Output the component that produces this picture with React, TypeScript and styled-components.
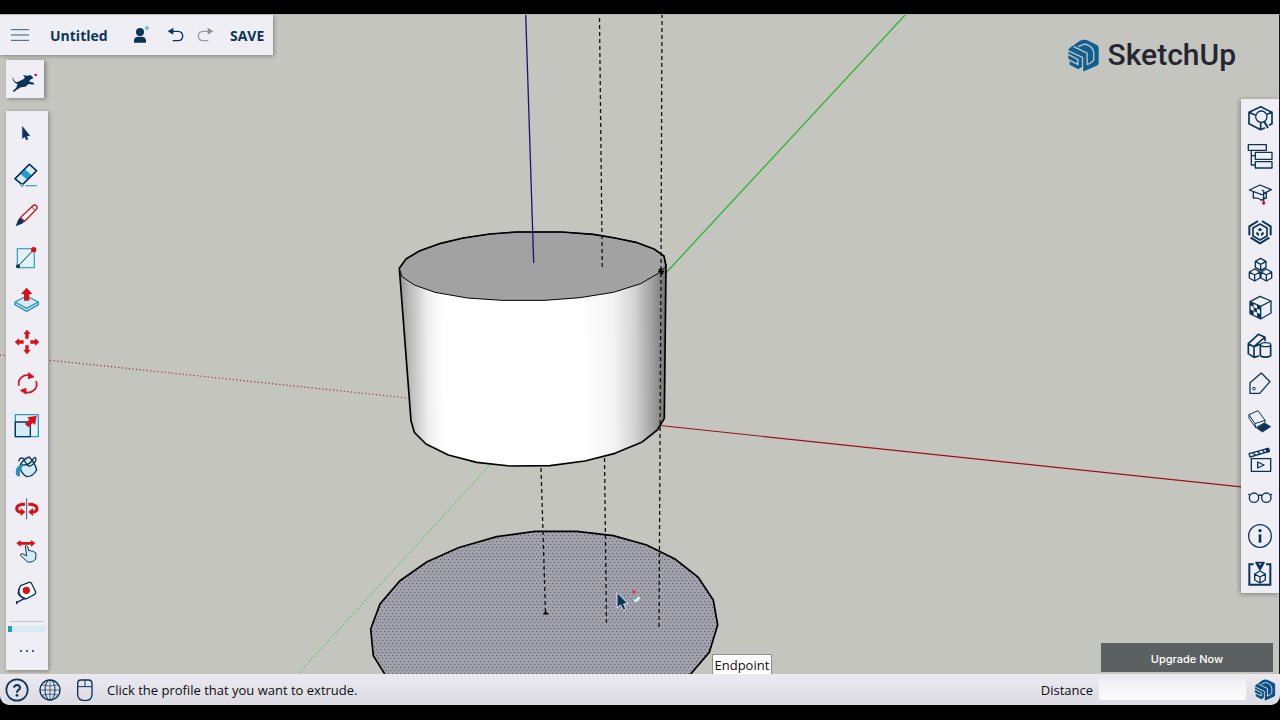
import React from "react";
import styled, { createGlobalStyle } from "styled-components";

const navy = "#0b3558";
const cyan = "#3fa6c8";
const pale = "#d3ecf5";
const red = "#d9101c";
const panel = "#efeef5";
const font = '"Open Sans", "Noto Sans", sans-serif';

const GlobalStyle = createGlobalStyle`
  * { box-sizing: border-box; }
  body { margin: 0; background: #000; font-family: ${font}; color: #0c0c10; }
  button { font: inherit; color: inherit; border: 0; padding: 0; background: none; cursor: pointer; }
`;

const Frame = styled.div`
  display: flex;
  flex-direction: column;
  min-height: 100vh;
  padding: 14px 0 15px;
`;

const Workspace = styled.main`
  position: relative;
  flex: 1;
  display: flex;
  justify-content: space-between;
  background: #c5c5bf;
  border-top: 1px solid #b4b4b0;
  border-right: 1px solid #14122c;
  overflow: hidden;
`;

const Scene = styled.svg`
  position: absolute;
  inset: 0;
  width: 100%;
  height: 100%;
`;

const LeftColumn = styled.div`
  position: relative;
  display: flex;
  flex-direction: column;
  align-items: flex-start;
  padding-bottom: 4px;
`;

const RightColumn = styled.div`
  position: relative;
  display: flex;
  flex-direction: column;
  align-items: flex-end;
  padding: 23px 0 2px;
`;

const FileBar = styled.header`
  display: flex;
  align-items: center;
  height: 40px;
  padding: 0 9px 0 7px;
  background: ${panel};
  color: ${navy};
  font-size: 14px;
  font-weight: 700;
  box-shadow: 1px 1px 4px rgba(0, 0, 0, 0.35);
`;

const Title = styled.button`
  min-width: 60px;
  margin: 0 18px 0 17px;
  text-align: left;
`;

const IconButton = styled.button<{ $gap?: number }>`
  display: flex;
  align-items: center;
  justify-content: center;
  margin-right: ${(p) => p.$gap ?? 0}px;
`;

const Icon = styled.svg`
  display: block;
  width: 26px;
  height: 26px;
  fill: none;
  stroke: ${navy};
  stroke-width: 4;
  stroke-linejoin: round;
`;

const SearchTile = styled.button`
  display: flex;
  align-items: center;
  justify-content: center;
  width: 38px;
  height: 38px;
  margin: 5px 0 13px 6px;
  background: ${panel};
  box-shadow: 2px 1px 4px rgba(0, 0, 0, 0.35);
`;

const ToolPanel = styled.nav`
  flex: 1;
  display: flex;
  flex-direction: column;
  width: 42px;
  margin-left: 6px;
  padding-top: 1px;
  background: ${panel};
  box-shadow: 1px 1px 4px rgba(0, 0, 0, 0.35);
`;

const ToolList = styled.div`
  flex: 1;
  display: grid;
  grid-auto-rows: 1fr;
`;

const PanelFooter = styled.div`
  display: flex;
  flex-direction: column;
  padding-top: 8px;
`;

const Divider = styled.hr`
  width: 34px;
  height: 1px;
  margin: 0 auto 4px;
  border: 0;
  background: #c6c6c9;
`;

const Track = styled.div`
  height: 6px;
  margin: 0 3px 0 2px;
  background: linear-gradient(90deg, #2c95b8 4px, #d5eaf2 4px);
`;

const MoreButton = styled.button`
  display: flex;
  align-items: center;
  justify-content: center;
  height: 38px;
`;

const Brand = styled.div`
  display: flex;
  align-items: center;
  gap: 8px;
  height: 34px;
  margin-right: 43px;
  color: #262633;
  font: 500 30px/34px Roboto, sans-serif;
`;

const BrandMark = styled.svg<{ $size: number }>`
  display: block;
  flex: none;
  width: ${(p) => p.$size}px;
  height: ${(p) => p.$size}px;
`;

const SidePanel = styled.nav`
  display: flex;
  flex-direction: column;
  width: 38px;
  margin-top: 27px;
  background: ${panel};
  box-shadow: -1px 1px 5px rgba(0, 0, 0, 0.35);
`;

const SideButton = styled.button`
  display: flex;
  align-items: center;
  justify-content: center;
  height: 38px;
`;

const UpgradeButton = styled.button`
  width: 172px;
  height: 29px;
  margin: auto 6px 0 0;
  padding-top: 2px;
  background: #5d6060;
  color: #fff;
  font: 500 11px/14px Inter, sans-serif;
`;

const Tooltip = styled.div`
  position: absolute;
  left: calc(50% + 72px);
  bottom: 0;
  height: 20px;
  padding: 0 2px;
  background: #fff;
  border: 1px solid #8e8e8e;
  border-bottom: 0;
  font-size: 13px;
  line-height: 20px;
`;

const StatusBar = styled.footer`
  display: flex;
  align-items: center;
  height: 31px;
  padding: 0 4px;
  background: linear-gradient(#ebeaf1, #dcdbe3);
  border-radius: 0 0 9px 9px;
  font-size: 13px;
`;

const Hint = styled.p`
  flex: 1;
  margin: 0;
`;

const DistanceLabel = styled.label`
  display: flex;
  align-items: center;
  gap: 6px;
  margin-right: 8px;
`;

const DistanceInput = styled.input`
  width: 147px;
  height: 21px;
  padding: 0 6px;
  border: 0;
  border-radius: 2px;
  background: linear-gradient(#f1f1f5, #fafafc);
  font: inherit;
`;

function LogoShape({ ink, gap }: { ink: string; gap: string }) {
  return (
    <>
      <path
        fill={ink}
        d="M4 33L7 28L38 6Q48 0 60 3L91 18Q96 21 96 27V73Q96 78 91 80L52 98L46 96V84L34 92L8 78V66L4 60V50L4 45Z"
      />
      <g fill="none" stroke={gap} strokeWidth="4">
        <path d="M2 35L47 56V98M20 23L61 43V78M2 62L33 77V62L2 46" />
        <path d="M34 23L48 17Q56 14 66 20Q81 28 81 42V62Q80 68 72 72L61 78" />
      </g>
    </>
  );
}

const tools: { name: string; art: React.ReactNode }[] = [
  {
    name: "Select",
    art: <path d="M25 19V56L32 50L37 60L42 58L38 48L48 47Z" fill={navy} strokeWidth="1" />,
  },
  {
    name: "Eraser",
    art: (
      <>
        <path d="M46 7L68 26L25 68L3 50Z" fill={pale} />
        <path d="M32 21L53 40L40 53L18 35Z" fill="#2b9aca" stroke="none" />
        <path d="M46 7L68 26L25 68L3 50Z" />
        <circle cx="24" cy="69" r="4" fill="#fff" strokeWidth="2" />
        <path d="M34 71H69" stroke={cyan} />
      </>
    ),
  },
  {
    name: "Line",
    art: (
      <>
        <path d="M19 44L57 8Q63 4 67 8Q72 13 67 19L32 55Z" fill="#fff" stroke={red} />
        <path d="M53 12L63 22" stroke={red} strokeWidth="3" />
        <path d="M5 70L12 51L18 44L31 56L24 62Z" fill={navy} stroke="none" />
      </>
    ),
  },
  {
    name: "Rectangle",
    art: (
      <>
        <path d="M10 11H61V68H10Z" fill="#e2f2f8" stroke={cyan} />
        <path d="M12 64L59 14" strokeWidth="3" />
        <circle cx="59" cy="14" r="8" fill={red} stroke="none" />
        <circle cx="12" cy="64" r="6" fill={navy} stroke="none" />
      </>
    ),
  },
  {
    name: "Push/Pull",
    art: (
      <>
        <path d="M38 27L73 45V53L38 73L3 53V45Z" fill={pale} stroke="#2c8fb8" />
        <path d="M3 45L38 64L73 45" stroke="#2c8fb8" />
        <path d="M38 2L55 21H46V41H30V21H21Z" fill={red} stroke="none" />
      </>
    ),
  },
  {
    name: "Move",
    art: (
      <path
        d="M39 2L50 15H44V29H34V15H28ZM39 76L50 63H44V49H34V63H28ZM2 39L15 28V34H29V44H15V50ZM76 39L63 28V34H49V44H63V50Z"
        fill={red}
        stroke="none"
      />
    ),
  },
  {
    name: "Rotate",
    art: (
      <>
        <path d="M15 47A25 25 0 0 1 48 17M66 33A25 25 0 0 1 32 65" stroke={red} strokeWidth="5" />
        <path d="M43 6L62 21L42 28ZM37 53L17 61L37 74Z" fill={red} stroke="none" />
      </>
    ),
  },
  {
    name: "Scale",
    art: (
      <>
        <path d="M4 8H73V74H4Z" fill="#e2f2f8" stroke="#2c9bbf" />
        <path d="M4 30H49V74H4Z" fill={pale} />
        <path d="M68 11L63 39L56 33L43 46L33 36L46 23L40 16Z" fill={red} stroke="none" />
      </>
    ),
  },
  {
    name: "Paint",
    art: (
      <>
        <path d="M21 29L47 12Q68 32 69 48Q62 66 38 69Q21 60 20 40Z" fill={pale} stroke="none" />
        <path d="M19 31Q16 55 38 68Q57 68 68 48Q63 27 46 9Q31 13 19 31ZM22 31Q45 38 58 14Q64 6 66 14Q66 26 49 36Q40 40 28 13Q17 9 14 22" />
        <path d="M5 55Q5 32 30 30Q24 42 18 49V67Q5 69 5 55Z" fill="#2c8fb8" stroke="none" />
      </>
    ),
  },
  {
    name: "Flip",
    art: (
      <>
        <path d="M33 25Q8 25 8 38Q8 47 24 49M43 25Q69 25 69 38Q69 47 53 49" stroke={red} strokeWidth="9" />
        <path d="M20 36L34 48L20 60ZM57 36L43 48L57 60Z" fill={red} stroke="none" />
        <path d="M38 7V70" stroke="#405b75" strokeWidth="3" />
      </>
    ),
  },
  {
    name: "Pan",
    art: (
      <>
        <path d="M34 27Q38 23 41 29L44 41Q49 38 52 43Q57 40 60 45Q66 45 66 51L65 66Q58 77 41 75L20 56Q18 49 26 50L38 57Z" fill={pale} strokeWidth="3" />
        <path d="M7 19L20 9V15H51V9L64 19L51 29V23H20V29Z" fill={red} stroke="none" />
      </>
    ),
  },
  {
    name: "Tape Measure",
    art: (
      <>
        <path d="M20 20L45 10Q50 9 53 14L65 39Q66 43 62 46L36 60Q25 59 19 49Q10 35 20 20Z" fill="#fff" />
        <path d="M17 27Q8 43 18 51L32 58L9 70M8 66V76" />
        <circle cx="37" cy="34" r="11" fill={red} stroke="none" />
      </>
    ),
  },
];

const cube = (x: number, y: number, r: number) => {
  const w = Math.round(r * 0.88);
  const h = Math.round(r / 2);
  return `M${x} ${y - r}L${x + w} ${y - h}V${y + h}L${x} ${y + r}L${x - w} ${y + h}V${y - h}ZM${x - w} ${y - h}L${x} ${y}L${x + w} ${y - h}M${x} ${y}V${y + r}`;
};

const panels: { name: string; art: React.ReactNode }[] = [
  {
    name: "Entity Info",
    art: (
      <>
        <path d="M54 68L41 74L6 56V22L41 5L75 22V56L66 61M6 22L26 31M41 54V74M60 28L75 22" strokeWidth="5" />
        <circle cx="43" cy="35" r="17" />
        <path d="M52 50L63 69" strokeWidth="6" />
      </>
    ),
  },
  {
    name: "Outliner",
    art: <path d="M4 5H58V22H4ZM25 28H75V49H25ZM25 56H75V75H25ZM13 22V66H25M13 38H25" />,
  },
  {
    name: "Instructor",
    art: (
      <>
        <path d="M39 12L73 26L44 41L7 27ZM19 33V51Q35 49 43 58Q49 52 58 51V35M44 27L50 30V62" />
        <circle cx="50" cy="66" r="5" fill={red} stroke="none" />
      </>
    ),
  },
  {
    name: "Extensions",
    art: (
      <>
        <path d="M7 49V22L33 6M45 6L71 22V49M67 56L39 73L11 56" strokeWidth="6" />
        <path d="M39 15L60 27V51L39 63L18 51V27Z" strokeWidth="5" />
        <path d="M39 28L45 32L39 36L33 32ZM29 40L35 43V50L29 46ZM49 40L43 43V50L49 46Z" fill={navy} strokeWidth="2" />
      </>
    ),
  },
  {
    name: "Components",
    art: <path d={cube(41, 22, 18) + cube(23, 54, 18) + cube(58, 54, 18)} />,
  },
  {
    name: "Materials",
    art: (
      <>
        <path d="M39 4L72 18V54L41 72L9 56V20ZM9 20L41 34L72 18M41 34V72" />
        <path d="M9 20L20 25V36L9 31ZM20 36L30 41V53L20 48ZM30 29L41 34V45L30 41ZM9 43L20 48V60L9 55ZM30 53L41 57V71L30 66Z" fill={navy} stroke="none" />
      </>
    ),
  },
  {
    name: "Styles",
    art: (
      <>
        <path d="M36 69L21 73L4 62V32L34 4L54 13V25M4 32L21 41V73M21 41L52 14M21 41L39 34" strokeWidth="5" />
        <path d="M40 36V68Q55 77 71 68V36" strokeWidth="5" />
        <ellipse cx="56" cy="35" rx="15" ry="6" />
      </>
    ),
  },
  {
    name: "Tags",
    art: (
      <>
        <path d="M9 35L43 6L69 32L38 67H9Z" />
        <circle cx="21" cy="53" r="4" strokeWidth="3" />
      </>
    ),
  },
  {
    name: "Shadows",
    art: (
      <>
        <path d="M6 17L33 5L54 34L24 44ZM6 17V27L26 56L54 41V34M24 44L26 56" strokeWidth="3" />
        <path d="M28 57L54 42L72 53L46 70Z" fill={navy} strokeWidth="1" />
      </>
    ),
  },
  {
    name: "Scenes",
    art: (
      <>
        <path d="M13 35H71V73H13ZM32 45L51 54L32 63Z" />
        <path d="M6 20L64 4L67 13L9 30ZM18 17L25 25M32 13L39 21M46 9L53 17" />
        <path d="M56 6L64 4L67 13L61 15Z" fill={navy} />
      </>
    ),
  },
  {
    name: "Display",
    art: (
      <>
        <circle cx="21" cy="38" r="14" />
        <circle cx="58" cy="38" r="14" />
        <path d="M34 32Q40 28 46 32M4 27L9 31M75 27L70 31" />
      </>
    ),
  },
  {
    name: "Model Info",
    art: (
      <>
        <circle cx="39" cy="39" r="34" />
        <path d="M39 34V59" strokeWidth="8" />
        <circle cx="39" cy="23" r="5" fill={navy} stroke="none" />
      </>
    ),
  },
  {
    name: "3D Warehouse",
    art: (
      <>
        <path d="M20 10H7V71H70V10H57" strokeWidth="6" strokeLinejoin="miter" />
        <path d="M27 5H51L39 26ZM32 8L39 18L46 8" strokeWidth="5" />
        <path d={cube(39, 48, 18)} />
      </>
    ),
  },
];

function ModelScene() {
  return (
    <Scene viewBox="0 15 1279 659" preserveAspectRatio="xMidYMid slice" aria-label="Model view">
      <defs>
        <linearGradient id="side" gradientUnits="userSpaceOnUse" x1="60" x2="858" y1="0" y2="-6">
          <stop offset="0" stopColor="#9a9a9a" />
          <stop offset="0.03" stopColor="#b8b8b8" />
          <stop offset="0.1" stopColor="#eeeeee" />
          <stop offset="0.16" stopColor="#ffffff" />
          <stop offset="0.68" stopColor="#ffffff" />
          <stop offset="0.8" stopColor="#f3f3f3" />
          <stop offset="0.88" stopColor="#d2d2d2" />
          <stop offset="0.95" stopColor="#9c9c9c" />
          <stop offset="1" stopColor="#6f6f6f" />
        </linearGradient>
        <pattern id="dots" width="4" height="6" patternUnits="userSpaceOnUse">
          <rect width="4" height="6" fill="#a2a1a8" />
          <rect width="1" height="1" x="0" y="1" fill="#55558a" />
          <rect width="1" height="1" x="2" y="4" fill="#55558a" />
        </pattern>
      </defs>
      <g fill="none" strokeWidth="1.2">
        <path d="M0 355L408 398" stroke="#8f3a3a" strokeDasharray="1.2 2.4" />
        <path d="M660 425.5L1280 491" stroke="#9a0f1c" />
        <path d="M906 14L664 275" stroke="#22b422" />
        <path d="M490 465L297 675" stroke="#4cc45a" strokeDasharray="1.2 2.4" />
      </g>
      <path
        d="M386 676L373.3 655.7L370.7 629L380 604L400 580.7L426.7 562L458.3 547.7L496.7 536.7L535 531.3H576.7L613.3 535.7L646.7 545L675 559L698.3 577.3L713.3 600L717.7 625L709.3 652.3L689 676Z"
        fill="url(#dots)"
        stroke="#000"
        strokeWidth="1.7"
      />
      <g transform="translate(380 210) scale(0.33333)" stroke="#000" strokeLinejoin="round">
        <path
          d="M58 175L93 632L103 667L138 702L205 735L290 757L390 768L510 767L615 753L705 730L785 697L832 660L853 625L858 165Z"
          fill="url(#side)"
          strokeWidth="5"
        />
        <path
          d="M58 175L78 147L118 123L182 100L250 84L330 72L410 66H545L640 73L705 84L768 97L822 117L852 138L858 168L838 188L782 221L700 247L600 263L495 271H365L262 264L165 247L103 225L66 200Z"
          fill="#a2a2a2"
          strokeWidth="3"
        />
        <path
          d="M58 175L78 147L118 123L182 100L250 84L330 72L410 66H545L640 73L705 84L768 97L822 117L852 138L858 168"
          fill="none"
          strokeWidth="5"
        />
      </g>
      <path d="M525.7 14L533.7 263" stroke="#17157a" strokeWidth="1.3" />
      <g stroke="#111" strokeWidth="1.3" strokeDasharray="4 3">
        <path d="M599.5 18L602.3 268" />
        <path d="M662 14L661 271L659 630" fill="none" />
        <path d="M541 468L545.5 613" />
        <path d="M604.5 458L606.5 625" />
      </g>
      <path d="M658 271.5H664M661 268V275M659 269L663 274" stroke="#000" strokeWidth="1.3" />
      <path d="M542.5 614.5L545.5 611L549 614.5Z" fill="#000" />
      <path
        d="M617 592.5V608L620.5 605L623.5 610.5L626 609L623.5 604L628 603.5Z"
        fill={navy}
        stroke="#e4e4f0"
        strokeWidth="1"
      />
      <circle cx="634" cy="592" r="1.8" fill="#e0305a" />
      <path d="M633 600.5Q638 601.5 639 597" fill="none" stroke="#e2f5fa" strokeWidth="2.4" />
      <path d="M631.5 599.5L634 601.5" stroke="#5b9fb5" strokeWidth="1.5" />
    </Scene>
  );
}

const undoArt = (
  <>
    <path d="M14 28L31 17V38Z" stroke="none" />
    <path d="M28 28H45Q59 29 59 42Q59 56 45 56H29" strokeWidth="4" fill="none" />
  </>
);

export default function App() {
  return (
    <>
      <GlobalStyle />
      <Frame>
        <Workspace>
          <ModelScene />
          <LeftColumn>
            <FileBar>
              <IconButton aria-label="Menu">
                <Icon viewBox="0 0 78 78">
                  <path d="M12 23H66M12 39H66M12 55H66" strokeWidth="3" stroke="#2f5f78" />
                </Icon>
              </IconButton>
              <Title>Untitled</Title>
              <IconButton aria-label="Share" $gap={9}>
                <Icon viewBox="0 0 78 78">
                  <circle cx="36" cy="30" r="12" fill={navy} stroke="none" />
                  <path d="M18 62V54Q20 45 29 44H44Q52 45 54 54V62Z" fill={navy} stroke="none" />
                  <path d="M57 11V25M50 18H64" stroke={cyan} strokeWidth="3" />
                </Icon>
              </IconButton>
              <IconButton aria-label="Undo" $gap={3}>
                <Icon viewBox="0 0 78 78">
                  <g fill={navy}>{undoArt}</g>
                </Icon>
              </IconButton>
              <IconButton aria-label="Redo" $gap={12}>
                <Icon viewBox="0 0 78 78">
                  <g fill="#8e8f96" stroke="#9a9ba2" transform="translate(78 0) scale(-1 1)">
                    {undoArt}
                  </g>
                </Icon>
              </IconButton>
              <button>SAVE</button>
            </FileBar>
            <SearchTile aria-label="Search tools">
              <Icon viewBox="0 0 78 78">
                <path
                  d="M2 31Q3 45 15 49L34 40L39 35L33 28L47 29L55 27L63 34L62 38L54 41L52 47L66 50L65 56L50 54L40 62L27 64L14 71L6 78L2 75L13 65L16 54Q0 49 2 31Z"
                  fill={navy}
                  stroke="none"
                />
                <circle cx="71" cy="27" r="4" fill={red} stroke="none" />
              </Icon>
            </SearchTile>
            <ToolPanel aria-label="Tools">
              <ToolList>
                {tools.map((t) => (
                  <IconButton key={t.name} aria-label={t.name}>
                    <Icon viewBox="0 0 78 78">{t.art}</Icon>
                  </IconButton>
                ))}
              </ToolList>
              <PanelFooter>
                <Divider />
                <Track />
                <MoreButton aria-label="More tools">
                  <Icon viewBox="0 0 78 78">
                    <g fill={navy} stroke="none">
                      <circle cx="21" cy="39" r="3" />
                      <circle cx="39" cy="39" r="3" />
                      <circle cx="57" cy="39" r="3" />
                    </g>
                  </Icon>
                </MoreButton>
              </PanelFooter>
            </ToolPanel>
          </LeftColumn>
          <RightColumn>
            <Brand>
              <BrandMark viewBox="0 0 100 100" $size={33} aria-hidden="true">
                <LogoShape ink="#0f5f93" gap="#c5c5bf" />
              </BrandMark>
              SketchUp
            </Brand>
            <SidePanel aria-label="Panels">
              {panels.map((p) => (
                <SideButton key={p.name} aria-label={p.name}>
                  <Icon viewBox="0 0 78 78">{p.art}</Icon>
                </SideButton>
              ))}
            </SidePanel>
            <UpgradeButton>Upgrade Now</UpgradeButton>
          </RightColumn>
          <Tooltip role="tooltip">Endpoint</Tooltip>
        </Workspace>
        <StatusBar>
          <IconButton aria-label="Help" $gap={7}>
            <Icon viewBox="0 0 78 78">
              <circle cx="39" cy="39" r="32" strokeWidth="5" />
              <path d="M30 32Q31 24 40 24Q48 25 48 32Q48 37 41 41Q39 43 39 47" strokeWidth="6" />
              <circle cx="39" cy="55" r="4" fill={navy} stroke="none" />
            </Icon>
          </IconButton>
          <IconButton aria-label="Language" $gap={9}>
            <Icon viewBox="0 0 78 78">
              <circle cx="39" cy="39" r="30" />
              <path d="M39 9V69M9 39H69M15 24Q39 30 63 24M15 54Q39 48 63 54" strokeWidth="2" />
              <ellipse cx="39" cy="39" rx="15" ry="30" strokeWidth="3" />
            </Icon>
          </IconButton>
          <IconButton aria-label="Mouse" $gap={9}>
            <Icon viewBox="0 0 78 78">
              <path d="M27 9H49Q60 9 60 20V52Q60 71 39 71Q17 71 17 52V20Q17 9 27 9Z" />
              <path d="M17 29H60M39 9V29" strokeWidth="3" />
            </Icon>
          </IconButton>
          <Hint>Click the profile that you want to extrude.</Hint>
          <DistanceLabel>
            Distance
            <DistanceInput type="text" />
          </DistanceLabel>
          <BrandMark viewBox="0 0 100 100" $size={22} aria-hidden="true">
            <LogoShape ink="#0b4f84" gap="#e6e5ec" />
          </BrandMark>
        </StatusBar>
      </Frame>
    </>
  );
}
